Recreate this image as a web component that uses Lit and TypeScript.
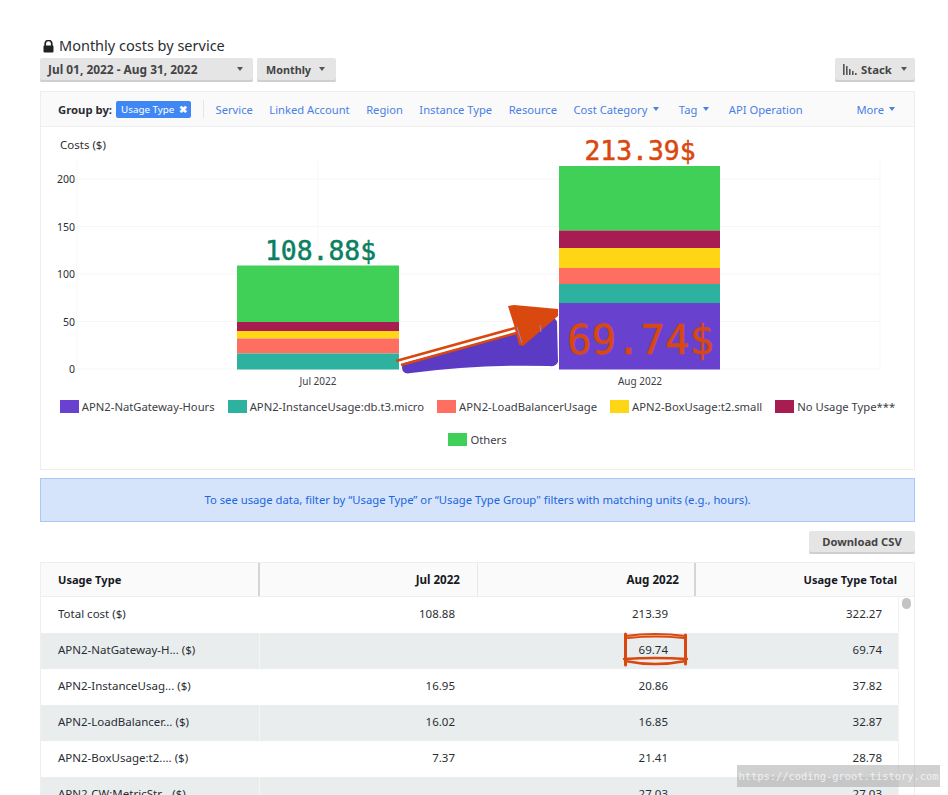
import { LitElement, html, css, svg } from "lit";
import { customElement } from "lit/decorators.js";

const ORANGE = "#d9480f";
const C = { purple: "#6842cf", teal: "#2eb2a0", coral: "#ff6f61", yellow: "#ffd616", maroon: "#a71d52", green: "#40cf57" };

const JUL: [number, number, string][] = [
  [265.5, 322, C.green], [322, 331, C.maroon], [331, 338.5, C.yellow], [338.5, 353.5, C.coral], [353.5, 369.5, C.teal],
];
const AUG: [number, number, string][] = [
  [166, 230.5, C.green], [230.5, 248, C.maroon], [248, 268, C.yellow], [268, 284, C.coral], [284, 303, C.teal], [303, 369.5, C.purple],
];
const TICKS: [string, number][] = [["200", 179], ["150", 226.5], ["100", 274], ["50", 321.5], ["0", 369]];
const LEGEND: [string, string][] = [
  ["APN2-NatGateway-Hours", C.purple], ["APN2-InstanceUsage:db.t3.micro", C.teal], ["APN2-LoadBalancerUsage", C.coral],
  ["APN2-BoxUsage:t2.small", C.yellow], ["No Usage Type***", C.maroon], ["Others", C.green],
];
const NAV: [string, boolean][] = [
  ["Service", false], ["Linked Account", false], ["Region", false], ["Instance Type", false],
  ["Resource", false], ["Cost Category", true], ["Tag", true], ["API Operation", false],
];
const ROWS = [
  ["Total cost ($)", "108.88", "213.39", "322.27"],
  ["APN2-NatGateway-H... ($)", "", "69.74", "69.74"],
  ["APN2-InstanceUsag... ($)", "16.95", "20.86", "37.82"],
  ["APN2-LoadBalancer... ($)", "16.02", "16.85", "32.87"],
  ["APN2-BoxUsage:t2.... ($)", "7.37", "21.41", "28.78"],
  ["APN2-CW:MetricStr... ($)", "", "27.03", "27.03"],
];

@customElement("app-root")
export class AppRoot extends LitElement {
  static styles = css`
    :host { display: block; }
    .page { position: relative; width: 948px; height: 795px; overflow: hidden; box-sizing: border-box; padding: 35px 33px 0 40px; background: #fff; font-family: "Noto Sans", sans-serif; font-size: 11.5px; color: #16191f; }
    .title { display: flex; align-items: center; gap: 5px; height: 19px; margin-bottom: 4px; padding-left: 3px; font-size: 14.5px; color: #2a2e33; }
    .title svg { margin-top: 4px; }
    .controls { display: flex; gap: 4px; margin-bottom: 9px; }
    .btn { height: 24px; box-sizing: border-box; display: flex; align-items: center; justify-content: space-between; background: #e5e5e5; border-radius: 2px; box-shadow: inset 0 -2px 0 #cfcfcf; font-weight: 700; font-size: 11.3px; color: #444; padding: 0 10px 2px 8px; }
    .btn.date { width: 213px; font-size: 11.9px; }
    .btn.monthly { width: 79px; padding: 0 11px 2px 9px; font-size: 10.8px; }
    .btn.stack { width: 80px; margin-left: auto; padding-right: 8px; }
    .stackin { display: flex; align-items: center; gap: 4px; }
    .caret { width: 0; height: 0; border-left: 3.5px solid transparent; border-right: 3.5px solid transparent; border-top: 4px solid #555; flex: none; }
    .panel { border: 1px solid #eee; height: 379px; box-sizing: border-box; margin-bottom: 8px; }
    .head { height: 35px; box-sizing: border-box; background: #fafafa; border-bottom: 1px solid #eee; display: flex; align-items: center; padding: 0 19px 0 17px; color: #4a7fe6; font-size: 11.2px; }
    .groupby { font-weight: 700; color: #2a2e33; margin-right: 4px; font-size: 11.3px; }
    .chip { display: flex; align-items: center; gap: 5px; height: 17px; width: 75px; box-sizing: border-box; padding-left: 5px; background: #3f87f5; color: #fff; border-radius: 2px; font-size: 9.8px; }
    .x { font-weight: 700; font-size: 10px; }
    .sep { width: 1px; height: 18px; background: #e5e5e5; margin: 0 11.5px 0 12px; }
    .nav { margin-right: 16.5px; display: flex; align-items: center; gap: 5.5px; white-space: nowrap; }
    .nav.drop { margin-right: 20px; }
    .nav .caret, .more .caret { border-top-color: #4a7fe6; }
    .more { margin-left: auto; display: flex; align-items: center; gap: 5px; }
    .chart { display: block; }
    .legend { display: flex; flex-wrap: wrap; justify-content: center; gap: 13px; padding: 7px 0 0; color: #3d4045; font-size: 11.25px; }
    .lg { display: flex; align-items: center; gap: 3px; height: 20px; white-space: nowrap; }
    .sw { width: 19px; height: 13px; flex: none; }
    .banner { height: 44px; box-sizing: border-box; border: 1px solid #a9c8f6; background: #d6e4fb; color: #1a66e0; display: flex; align-items: center; justify-content: center; font-size: 11.27px; padding-bottom: 2px; margin-bottom: 9px; }
    .dl { display: flex; justify-content: flex-end; margin-bottom: 8px; }
    .dl .btn { width: 106px; height: 23px; justify-content: center; padding: 0 0 2px; font-size: 11.2px; }
    .table { border: 1px solid #eee; border-bottom: 0; }
    .thead { display: grid; grid-template-columns: 219px 218px 218px 1fr; height: 34px; background: #fafafa; font-weight: 700; font-size: 11.1px; border-bottom: 1px solid #eee; box-sizing: border-box; }
    .th { display: flex; align-items: center; justify-content: flex-end; padding-right: 17px; border-right: 1px solid #e8e8e8; }
    .th.jul { font-size: 11.6px; }
    .th.first { justify-content: flex-start; padding-left: 17px; border-right: 2px solid #d5d5d5; }
    .th.mid { border-right: 2px solid #d5d5d5; padding-right: 15px; font-size: 11.6px; }
    .th.last { border-right: 0; }
    .tbody { display: flex; }
    .rows { width: 857px; }
    .row { display: grid; grid-template-columns: 219px 195px 213px 214px; padding-right: 16px; height: 36px; align-items: stretch; }
    .row.alt { background: #e9edee; }
    .td { display: flex; align-items: center; justify-content: flex-end; color: #2a2e33; padding-bottom: 4px; box-sizing: border-box; }
    .td.first { justify-content: flex-start; padding-left: 17px; }
    .row.alt .td.first { border-right: 1px solid #f4f6f6; }
    .scroll { flex: 1; display: flex; justify-content: center; padding-top: 1px; border-left: 1px solid #f2f2f2; }
    .thumb { width: 9px; height: 11px; border-radius: 5px; background: #c4c4c4; }
    .ink { position: absolute; left: 0; top: 0; pointer-events: none; }
    .mark { position: absolute; left: 737px; top: 765px; width: 203px; height: 22px; display: flex; align-items: center; justify-content: center; background: rgba(150, 150, 150, 0.45); color: #f0f0f0; font-family: "DejaVu Sans Mono", monospace; font-size: 10.4px; white-space: nowrap; }
    svg text { font-family: "Noto Sans", sans-serif; }
    svg text.big { font-family: "DejaVu Sans Mono", monospace; stroke-width: 0.5px; }
  `;

  private bars(x: number, w: number, segs: [number, number, string][]) {
    return segs.map(([a, b, c]) => svg`<rect x=${x} y=${a} width=${w} height=${b - a} fill=${c}></rect>`);
  }

  private chart() {
    return html`<svg class="chart" width="873" height="262" viewBox="41 127 873 262">
      <text x="60" y="149" font-size="11.5" fill="#2a2e33">Costs ($)</text>
      ${TICKS.map(([l, y]) => svg`
        <line x1="77" x2="880" y1=${y} y2=${y} stroke="#f6f6f6"></line>
        <text x="75" y=${y + 4} text-anchor="end" font-size="10.5" fill="#2a2e33">${l}</text>`)}
      ${[77, 318, 640, 880].map((x) => svg`<line x1=${x} x2=${x} y1="161" y2="369" stroke="#f7f7f7"></line>`)}
      ${this.bars(237, 162, JUL)}
      ${this.bars(559, 161, AUG)}
      <text x="318" y="385" text-anchor="middle" font-size="10" fill="#3d4045">Jul 2022</text>
      <text x="640" y="385" text-anchor="middle" font-size="10" fill="#3d4045">Aug 2022</text>
      <text class="big" x="320.5" y="260" text-anchor="middle" font-size="26.4" fill="#0a8060" stroke="#0a8060">108.88$</text>
      <text class="big" x="640" y="160" text-anchor="middle" font-size="26.4" fill=${ORANGE} stroke=${ORANGE}>213.39$</text>
      <text class="big" x="640.5" y="354" text-anchor="middle" font-size="40.7" fill=${ORANGE} stroke=${ORANGE}>69.74$</text>
      <path d="M402 367 Q402 363 408 362 L517 333 Q540 326 552 319 Q556 318 557 322 L558 362 Q556 367 549 366 Q480 364 411 373 Q402 375 402 367 Z" fill="#5b3bc4"></path>
      <path d="M396 361 L517 327.5 M401 365 L520 332" stroke=${ORANGE} stroke-width="2.6" fill="none"></path>
      <path d="M508 306 L514 305 L558 309 L558 316 L523 346 L519 345 L514 325 Z" fill=${ORANGE}></path>
      <path d="M517 327 L522 343 M540 325 L541 332" stroke="#9a82e0" stroke-width="1" fill="none"></path>
    </svg>`;
  }

  render() {
    return html`<div class="page">
      <div class="title">
        <svg width="11" height="13" viewBox="0 0 11 13"><path d="M2.2 6V3.8a3.3 3.3 0 0 1 6.6 0V6" fill="none" stroke="#222" stroke-width="1.7"></path><rect x="0.5" y="5.6" width="10" height="7" rx="1" fill="#222"></rect></svg>
        <span>Monthly costs by service</span>
      </div>
      <div class="controls">
        <div class="btn date"><span>Jul 01, 2022 - Aug 31, 2022</span><i class="caret"></i></div>
        <div class="btn monthly"><span>Monthly</span><i class="caret"></i></div>
        <div class="btn stack">
          <span class="stackin">
            <svg width="14" height="11" viewBox="0 0 14 11" fill="#555"><rect x="0" y="0" width="1.6" height="11"></rect><rect x="3" y="2" width="1.6" height="9"></rect><rect x="6" y="5" width="1.6" height="6"></rect><rect x="9" y="7" width="1.6" height="4"></rect><rect x="12" y="9" width="1.6" height="2"></rect></svg>
            <span>Stack</span>
          </span>
          <i class="caret"></i>
        </div>
      </div>
      <div class="panel">
        <div class="head">
          <span class="groupby">Group by:</span>
          <span class="chip">Usage Type <span class="x">✖</span></span>
          <span class="sep"></span>
          ${NAV.map(([t, c]) => html`<span class="nav ${c ? "drop" : ""}">${t}${c ? html`<i class="caret"></i>` : ""}</span>`)}
          <span class="more">More <i class="caret"></i></span>
        </div>
        ${this.chart()}
        <div class="legend">
          ${LEGEND.map(([t, c]) => html`<div class="lg"><span class="sw" style="background:${c}"></span>${t}</div>`)}
        </div>
      </div>
      <div class="banner">To see usage data, filter by “Usage Type” or “Usage Type Group" filters with matching units (e.g., hours).</div>
      <div class="dl"><div class="btn">Download CSV</div></div>
      <div class="table">
        <div class="thead">
          <div class="th first">Usage Type</div>
          <div class="th jul">Jul 2022</div>
          <div class="th mid">Aug 2022</div>
          <div class="th last">Usage Type Total</div>
        </div>
        <div class="tbody">
          <div class="rows">
            ${ROWS.map((r, i) => html`<div class="row ${i % 2 ? "alt" : ""}">
              <div class="td first">${r[0]}</div><div class="td">${r[1]}</div><div class="td">${r[2]}</div><div class="td">${r[3]}</div>
            </div>`)}
          </div>
          <div class="scroll"><div class="thumb"></div></div>
        </div>
      </div>
      <svg class="ink" width="948" height="795" viewBox="0 0 948 795" fill="none" stroke=${ORANGE} stroke-linecap="round">
        <path d="M625 636 Q655 632 686 636 M628 638 Q655 635 684 638" stroke-width="2.2"></path>
        <path d="M624 659 Q655 657 687 659 M625 661 Q655 667 686 661" stroke-width="2.4"></path>
        <path d="M625.5 634 L625.5 665" stroke-width="3"></path>
        <path d="M685.5 635 L685.5 664" stroke-width="3"></path>
      </svg>
      <div class="mark">https://coding-groot.tistory.com</div>
    </div>`;
  }
}
